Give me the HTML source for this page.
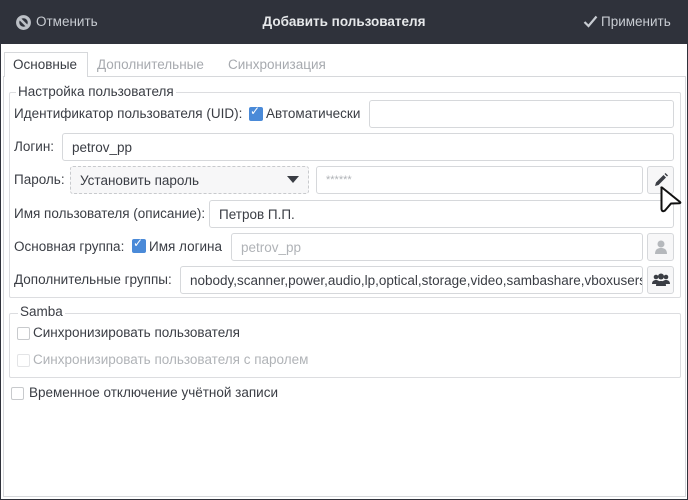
<!DOCTYPE html><html><head><meta charset="utf-8"><style>
*{box-sizing:border-box;margin:0;padding:0}
body{width:688px;height:500px;position:relative;background:#fff;font-family:"Liberation Sans","DejaVu Sans",sans-serif;font-size:13px;color:#3a3d44;overflow:hidden}
.a{position:absolute;white-space:nowrap}
.hdr{left:0;top:0;width:688px;height:44px;background:#2f323b}
.win{left:0;top:0;width:688px;height:500px;border:1px solid #2f323b}
.inp{position:absolute;border:1px solid #d6d8db;border-radius:3px;background:#fff;padding-left:9px;display:flex;align-items:center;white-space:nowrap;overflow:hidden}
.btn{position:absolute;border:1px solid #d6d8db;border-radius:3px;background:#f7f7f8;display:flex;align-items:center;justify-content:center}
.cb{position:absolute;width:13px;height:13px;border:1px solid #c8cacd;border-radius:2px;background:#fff}
.cbon{position:absolute;width:14px;height:14px;border-radius:2px;background:#4a8ad8}
.grp{position:absolute;border:1px solid #dcdde0;border-radius:2px}
</style></head><body>
<div class="a hdr"></div>
<div class="a win"></div>
<svg class="a" style="left:15px;top:14px" width="17" height="17" viewBox="0 0 16 16"><circle cx="8" cy="8" r="7" fill="#bcc0c6"/><circle cx="8" cy="8" r="4" fill="#2f323b"/><path d="M4 4L12 12" stroke="#bcc0c6" stroke-width="2.4"/></svg>
<div class="a" style="left:36px;top:14px;color:#c8ccd2;font-size:13.5px">Отменить</div>
<div class="a" style="left:0;width:688px;text-align:center;top:14px;color:#e6e8ea;font-weight:bold;font-size:13.5px">Добавить пользователя</div>
<svg class="a" style="left:583px;top:15px" width="15" height="13" viewBox="0 0 15 13"><path d="M1.5 7L5.5 11L13.5 1.5" fill="none" stroke="#c8ccd2" stroke-width="2.2"/></svg>
<div class="a" style="left:601px;top:14px;color:#c8ccd2;font-size:13.5px">Применить</div>

<div class="a" style="left:3px;top:76px;width:683px;height:421px;border:1px solid #d6d8db"></div>
<div class="a" style="left:4px;top:52px;width:84px;height:25px;background:#fff;border:1px solid #d6d8db;border-bottom:none"></div>
<div class="a" style="left:13px;top:57px;color:#3a3d44;font-size:13.5px">Основные</div>
<div class="a" style="left:97px;top:57px;color:#a7aaaf;font-size:13.5px">Дополнительные</div>
<div class="a" style="left:228px;top:57px;color:#a7aaaf;font-size:13.5px">Синхронизация</div>

<div class="grp" style="left:9px;top:92px;width:672px;height:206px"></div>
<div class="a" style="left:16px;top:84px;background:#fff;padding:0 2px;font-size:13.5px">Настройка пользователя</div>
<div class="a" style="left:14px;top:106px;font-size:13.5px">Идентификатор пользователя (UID):</div>
<div class="cbon" style="left:249px;top:107px"></div><div class="a" style="left:250px;top:104px;color:#fff;font-size:12px;font-weight:bold">✓</div>
<div class="a" style="left:266px;top:106px;font-size:13.5px">Автоматически</div>
<div class="inp" style="left:369px;top:100px;width:305px;height:28px"></div>

<div class="a" style="left:14px;top:139px;font-size:13.5px">Логин:</div>
<div class="inp" style="left:62px;top:133px;width:612px;height:28px;font-size:13.5px">petrov_pp</div>

<div class="a" style="left:14px;top:172px;font-size:13.5px">Пароль:</div>
<div class="inp" style="left:70px;top:166px;width:239px;height:28px;background:#f7f7f8;border:1px dashed #c8cacd;font-size:13.5px">Установить пароль</div>
<svg class="a" style="left:287px;top:176px" width="12" height="7"><path d="M0 0H12L6 7Z" fill="#3a3d44"/></svg>
<div class="inp" style="left:316px;top:166px;width:327px;height:28px;color:#b0b3b7;font-size:11px">******</div>
<div class="btn" style="left:647px;top:166px;width:27px;height:28px"><svg width="16" height="16" viewBox="0 0 16 16"><path d="M2 14L3 10.5L10.5 3L13 5.5L5.5 13Z" fill="#3a3d44"/><path d="M11.5 2L12.5 1L15 3.5L14 4.5Z" fill="#3a3d44"/></svg></div>

<div class="a" style="left:14px;top:206px;font-size:13.5px">Имя пользователя (описание):</div>
<div class="inp" style="left:209px;top:200px;width:465px;height:28px;font-size:13.5px">Петров П.П.</div>

<div class="a" style="left:14px;top:239px;font-size:13.5px">Основная группа:</div>
<div class="cbon" style="left:132px;top:239px"></div><div class="a" style="left:133px;top:236px;color:#fff;font-size:12px;font-weight:bold">✓</div>
<div class="a" style="left:149px;top:239px;font-size:13.5px">Имя логина</div>
<div class="inp" style="left:231px;top:233px;width:412px;height:28px;color:#b0b3b7;font-size:13.5px">petrov_pp</div>
<div class="btn" style="left:647px;top:233px;width:27px;height:28px"><svg width="14" height="16" viewBox="0 0 14 16"><circle cx="7" cy="5" r="3.5" fill="#b5b8bc"/><path d="M1 15C1 10 4 9 7 9S13 10 13 15Z" fill="#b5b8bc"/></svg></div>

<div class="a" style="left:14px;top:272px;font-size:13.5px">Дополнительные группы:</div>
<div class="inp" style="left:180px;top:266px;width:463px;height:28px;font-size:13.5px;padding-left:9px">nobody,scanner,power,audio,lp,optical,storage,video,sambashare,vboxusers</div>
<div class="btn" style="left:647px;top:266px;width:27px;height:28px"><svg width="18" height="14" viewBox="0 0 18 14"><circle cx="4" cy="4" r="2.3" fill="#3a3d44"/><circle cx="14" cy="4" r="2.3" fill="#3a3d44"/><circle cx="9" cy="3.5" r="3" fill="#3a3d44"/><path d="M0 11C0 8 2 7 4 7S8 8 8 11ZM10 11C10 8 12 7 14 7S18 8 18 11Z" fill="#3a3d44"/><path d="M4 13C4 9 6 8 9 8S14 9 14 13Z" fill="#3a3d44"/></svg></div>

<div class="grp" style="left:9px;top:313px;width:672px;height:65px"></div>
<div class="a" style="left:18px;top:304px;background:#fff;padding:0 2px;font-size:13.5px">Samba</div>
<div class="cb" style="left:17px;top:327px"></div>
<div class="a" style="left:33px;top:325px;font-size:13.5px">Синхронизировать пользователя</div>
<div class="cb" style="left:17px;top:354px;border-color:#e3e4e6"></div>
<div class="a" style="left:33px;top:352px;color:#b0b3b7;font-size:13.5px">Синхронизировать пользователя с паролем</div>
<div class="cb" style="left:11px;top:387px"></div>
<div class="a" style="left:29px;top:385px;font-size:13.5px">Временное отключение учётной записи</div>

<svg class="a" style="left:656px;top:183px;z-index:10" width="30" height="32" viewBox="0 0 30 32"><path d="M5.5 5Q5 4 6 4.5L24 19Q25 20 23.5 20.2L15 20.5L9 27.5Q6 29.5 5.5 26Z" fill="#fff" stroke="#111" stroke-width="2" stroke-linejoin="round"/></svg>
</body></html>
